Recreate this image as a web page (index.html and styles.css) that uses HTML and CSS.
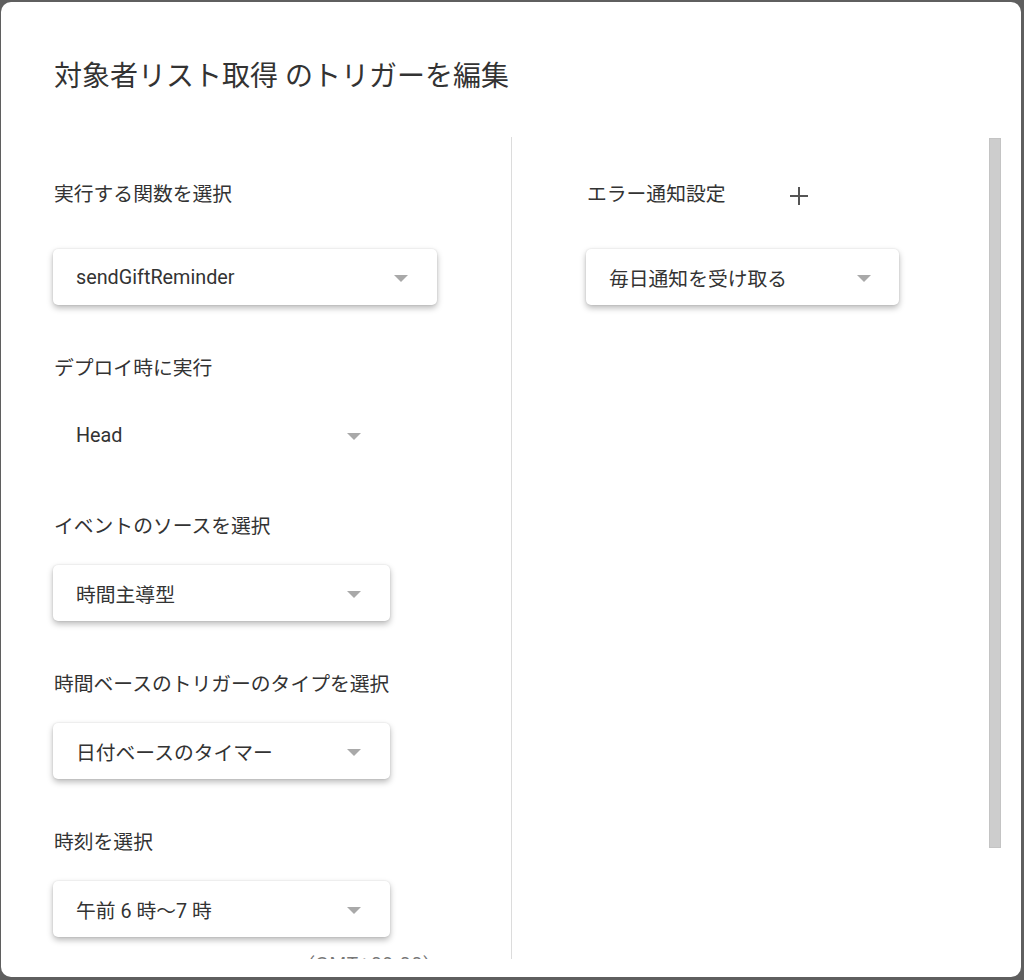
FILE: index.html
```html
<!DOCTYPE html>
<html lang="ja">
<head>
<meta charset="utf-8">
<link rel="stylesheet" href="styles.css">
</head>
<body>
<div class="dialog">
  <h1 class="title">対象者リスト取得 のトリガーを編集</h1>
  <div class="content">
    <div class="col left">
      <div class="label first">実行する関数を選択</div>
      <div class="select wide first-box"><span class="val">sendGiftReminder</span><span class="arrow"></span></div>
      <div class="label">デプロイ時に実行</div>
      <div class="select plain"><span class="val">Head</span><span class="arrow"></span></div>
      <div class="label">イベントのソースを選択</div>
      <div class="select"><span class="val">時間主導型</span><span class="arrow"></span></div>
      <div class="label">時間ベースのトリガーのタイプを選択</div>
      <div class="select"><span class="val">日付ベースのタイマー</span><span class="arrow"></span></div>
      <div class="label">時刻を選択</div>
      <div class="select"><span class="val">午前 6 時〜7 時</span><span class="arrow"></span></div>
      <div class="gmt">(GMT+09:00)</div>
    </div>
    <div class="divider"></div>
    <div class="col right">
      <div class="right-inner">
        <div class="label first label-row">エラー通知設定<span class="plus"></span></div>
        <div class="select narrow first-box"><span class="val">毎日通知を受け取る</span><span class="arrow"></span></div>
      </div>
      <div class="scrollbar"></div>
    </div>
  </div>
</div>
</body>
</html>
```
FILE: styles.css
```css
html, body {
  margin: 0;
  padding: 0;
  background: #5f5f5f;
}
body {
  font-family: Roboto, "Noto Sans CJK JP", sans-serif;
  color: #333;
}
.dialog {
  margin: 2px 3px 0 1px;
  height: 975px;
  background: #fff;
  border-radius: 10px;
  overflow: hidden;
  box-sizing: border-box;
}
.title {
  margin: 0;
  padding: 58px 0 0 53px;
  height: 79px;
  box-sizing: border-box;
  font-size: 28px;
  font-weight: 400;
  line-height: 34px;
  color: #333;
}
.content {
  margin-top: 56px;
  height: 822px;
  display: flex;
  overflow: hidden;
}
.col.left {
  width: 510px;
  flex: none;
  padding-left: 52px;
  box-sizing: border-box;
}
.divider {
  width: 1px;
  background: #dcdcdc;
  flex: none;
}
.col.right {
  flex: 1;
  display: flex;
  padding-left: 74px;
}
.right-inner {
  width: 313px;
}
.label {
  font-size: 19.8px;
  line-height: 24px;
  margin-top: 52px;
  padding-left: 1px;
}
.label.first {
  margin-top: 46px;
}
.label-row {
  display: flex;
  align-items: center;
}
.plus {
  position: relative;
  width: 18px;
  height: 18px;
  margin-left: 65px;
  margin-top: 2px;
}
.plus::before, .plus::after {
  content: "";
  position: absolute;
  background: #555;
}
.plus::before {
  left: 0;
  top: 8px;
  width: 18px;
  height: 2px;
}
.plus::after {
  left: 8px;
  top: 0;
  width: 2px;
  height: 18px;
}
.select {
  margin-top: 26px;
  width: 337px;
  height: 56px;
  box-sizing: border-box;
  padding: 0 29px 0 23px;
  display: flex;
  align-items: center;
  justify-content: space-between;
  background: #fff;
  border-radius: 5px;
  box-shadow: 0 3px 6px rgba(0,0,0,0.28), 0 0 2px rgba(0,0,0,0.12);
  font-size: 19.8px;
}
.select .val {
  white-space: nowrap;
}
.select.wide {
  width: 384px;
}
.select.narrow {
  width: 313px;
  padding-right: 28px;
}
.select.first-box {
  margin-top: 42px;
}
.select.plain {
  box-shadow: none;
}
.arrow {
  width: 0;
  height: 0;
  border-left: 7px solid transparent;
  border-right: 7px solid transparent;
  border-top: 7px solid #a9a9a9;
  margin-top: 2px;
}
.gmt {
  margin-top: 15px;
  padding-left: 255px;
  font-size: 19px;
  color: #777;
  letter-spacing: 1px;
}
.scrollbar {
  margin-left: auto;
  margin-right: 20px;
  margin-top: 1px;
  width: 12px;
  height: 710px;
  background: #cdcdcd;
  border: 1px solid #c4c4c4;
  box-sizing: border-box;
}
```
